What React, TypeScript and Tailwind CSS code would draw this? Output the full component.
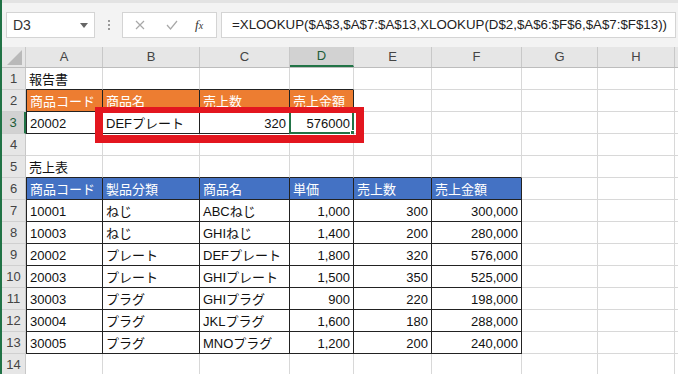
import React from "react";

type Cell = { v: string; right?: boolean };

const COLS = [
  { k: "A", w: 77 },
  { k: "B", w: 97 },
  { k: "C", w: 90 },
  { k: "D", w: 64 },
  { k: "E", w: 78 },
  { k: "F", w: 90 },
  { k: "G", w: 76 },
  { k: "H", w: 77 },
  { k: "", w: 80 },
];

const txt = (v: string): Cell => ({ v });
const num = (v: string): Cell => ({ v, right: true });

const DATA: Record<number, Cell[]> = {
  1: [txt("報告書")],
  2: [txt("商品コード"), txt("商品名"), txt("売上数"), txt("売上金額")],
  3: [txt("20002"), txt("DEFプレート"), num("320"), num("576000")],
  5: [txt("売上表")],
  6: [txt("商品コード"), txt("製品分類"), txt("商品名"), txt("単価"), txt("売上数"), txt("売上金額")],
  7: [txt("10001"), txt("ねじ"), txt("ABCねじ"), num("1,000"), num("300"), num("300,000")],
  8: [txt("10003"), txt("ねじ"), txt("GHIねじ"), num("1,400"), num("200"), num("280,000")],
  9: [txt("20002"), txt("プレート"), txt("DEFプレート"), num("1,800"), num("320"), num("576,000")],
  10: [txt("20003"), txt("プレート"), txt("GHIプレート"), num("1,500"), num("350"), num("525,000")],
  11: [txt("30003"), txt("プラグ"), txt("GHIプラグ"), num("900"), num("220"), num("198,000")],
  12: [txt("30004"), txt("プラグ"), txt("JKLプラグ"), num("1,600"), num("180"), num("288,000")],
  13: [txt("30005"), txt("プラグ"), txt("MNOプラグ"), num("1,200"), num("200"), num("240,000")],
};

const ROWS = Array.from({ length: 14 }, (_, i) => i + 1);

const inTable = (r: number, c: number) =>
  (r >= 2 && r <= 3 && c >= 0 && c <= 3) || (r >= 6 && r <= 13 && c >= 0 && c <= 5);

const FONT = "font-['Liberation_Sans','Noto_Sans_CJK_JP',sans-serif]";

function SheetCell({ r, c, w }: { r: number; c: number; w: number }) {
  const cell = DATA[r]?.[c];
  const rightBlack = inTable(r, c) || inTable(r, c + 1);
  const bottomBlack = inTable(r, c) || inTable(r + 1, c);
  const leftBlack = c === 0 && inTable(r, c);
  const fill =
    r === 2 && c <= 3
      ? "bg-[#ed7d31] text-white"
      : r === 6 && c <= 5
      ? "bg-[#4472c4] text-white"
      : "bg-white text-[#111]";
  const selected = r === 3 && c === 3;
  return (
    <div
      style={{ width: w }}
      className={`relative h-[22px] shrink-0 overflow-visible whitespace-nowrap px-[3px] pt-[3px] text-[13px] leading-[17px] ${fill} ${
        rightBlack ? "border-r border-r-[#222]" : "border-r border-r-[#d8d8d8]"
      } ${bottomBlack ? "border-b border-b-[#222]" : "border-b border-b-[#d8d8d8]"} ${
        leftBlack ? "border-l border-l-[#222]" : ""
      } ${cell?.right ? "text-right" : "text-left"}`}
    >
      {cell?.v}
      {selected && (
        <span className="pointer-events-none absolute -left-[1px] -top-[1px] -right-[1px] -bottom-[1px] border-2 border-[#217346]">
          <span className="absolute -bottom-[4px] -right-[4px] h-[6px] w-[6px] border border-white bg-[#217346]" />
        </span>
      )}
    </div>
  );
}

export default function App() {
  return (
    <div className={`relative h-[374px] w-[678px] overflow-hidden border-l-2 border-l-[#217346] bg-white ${FONT}`}>
      {/* Formula bar */}
      <div className="flex h-[47px] items-start border-t-[3px] border-t-[#e3e3e3] bg-[#f3f3f3] pt-[9px]">
        <div className="ml-[4px] flex h-[26px] w-[89px] items-center justify-between border border-[#d4d4d4] bg-white pl-[6px] pr-[6px] text-[14px] text-[#333]">
          <span>D3</span>
          <svg width="8" height="5" viewBox="0 0 8 5">
            <path d="M0 0h8L4 5z" fill="#666" />
          </svg>
        </div>
        <div className="flex h-[26px] w-[27px] flex-col items-center justify-center gap-[2px]">
          <span className="h-[2px] w-[2px] bg-[#9a9a9a]" />
          <span className="h-[2px] w-[2px] bg-[#9a9a9a]" />
          <span className="h-[2px] w-[2px] bg-[#9a9a9a]" />
        </div>
        <div className="flex h-[26px] w-[95px] items-center border border-[#d4d4d4] bg-white">
          <svg className="ml-[12px]" width="10" height="10" viewBox="0 0 10 10">
            <path d="M1 1l8 8M9 1l-8 8" stroke="#a8a8a8" strokeWidth="1.2" />
          </svg>
          <svg className="ml-[21px]" width="12" height="10" viewBox="0 0 12 10">
            <path d="M1 5l3.5 4L11 1" stroke="#a8a8a8" strokeWidth="1.2" fill="none" />
          </svg>
          <span className="ml-[17px] font-['Liberation_Serif',serif] text-[13px] italic text-[#333]">
            f<span className="text-[10px]">x</span>
          </span>
        </div>
        <div className="ml-[4px] flex h-[26px] w-[455px] items-center overflow-hidden whitespace-nowrap border border-[#d4d4d4] bg-white pl-[10px] text-[13.3px] text-[#222]">
          =XLOOKUP($A$3,$A$7:$A$13,XLOOKUP(D$2,$A$6:$F$6,$A$7:$F$13))
        </div>
      </div>

      {/* Column headers */}
      <div className="flex h-[21px] border-b border-b-[#bdbdbd] bg-[#e6e6e6] text-[13px] text-[#444]">
        <div className="relative h-full w-[24px] shrink-0 border-r border-r-[#c8c8c8]">
          <svg className="absolute bottom-[2px] right-[3px]" width="15" height="15" viewBox="0 0 15 15">
            <path d="M15 0V15H0z" fill="#b9b9b9" />
          </svg>
        </div>
        {COLS.map((col, i) => (
          <div
            key={i}
            style={{ width: col.w }}
            className={`flex h-full shrink-0 items-center justify-center border-r border-r-[#c8c8c8] ${
              col.k === "D" ? "border-b-2 border-b-[#217346] bg-[#d2d2d2] text-[#1e5c38]" : ""
            }`}
          >
            {col.k}
          </div>
        ))}
      </div>

      {/* Rows */}
      {ROWS.map((r) => (
        <div key={r} className="flex">
          <div
            className={`flex h-[22px] w-[24px] shrink-0 items-center justify-center border-b border-b-[#d0d0d0] text-[13px] ${
              r === 3
                ? "border-r-2 border-r-[#217346] bg-[#d2d2d2] text-[#1e5c38]"
                : "border-r border-r-[#c8c8c8] bg-[#e6e6e6] text-[#444]"
            }`}
          >
            {r}
          </div>
          {COLS.map((col, c) => (
            <SheetCell key={c} r={r} c={c} w={col.w} />
          ))}
        </div>
      ))}

      {/* Red highlight frame */}
      <div className="pointer-events-none absolute left-[93px] top-[107px] h-[36px] w-[269px] border-[8px] border-t-[6px] border-[#e3161f]" />
    </div>
  );
}
